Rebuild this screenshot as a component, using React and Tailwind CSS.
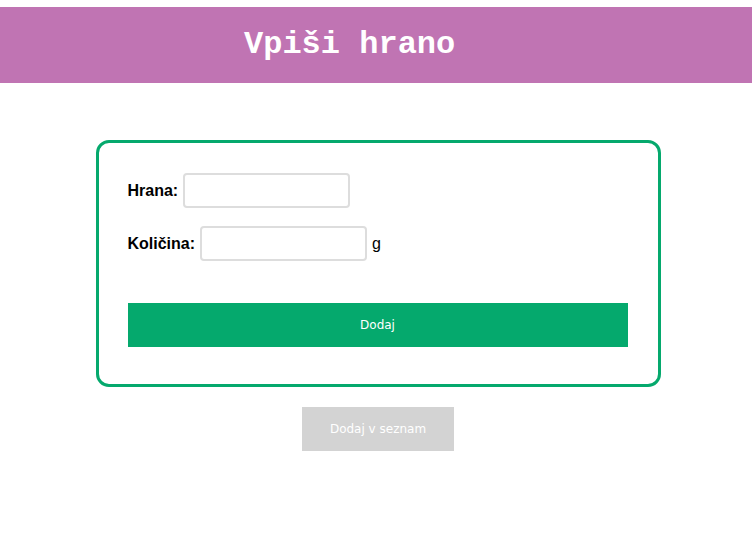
import React, { useState } from 'react';

const App = () => {
  const [hrana, setHrana] = useState('');
  const [kolicina, setKolicina] = useState('');

  return (
    <div className="min-h-screen bg-white pt-[7px] font-['Liberation_Sans',Arial,sans-serif]">
      {/* Header */}
      <header className="h-[76px] bg-[#c074b3] flex items-center pl-[244px]">
        <h1 className="text-[32px] font-bold text-white font-['Liberation_Mono','Courier_New',monospace] leading-none">
          Vpiši hrano
        </h1>
      </header>

      {/* Form card */}
      <div className="pl-[4px]">
        <div className="mt-[57px] mx-auto w-[565px] border-[3px] border-[#05a96d] rounded-[13px] pt-[30px] pb-[37px] pl-[29px] pr-[29px]">
          <div className="flex items-center gap-[5px] h-[35px]">
            <label className="text-[16px] font-bold text-black">Hrana:</label>
            <input
              value={hrana}
              onChange={(e) => setHrana(e.target.value)}
              className="w-[167px] h-[35px] border-2 border-[#dddddd] rounded-[4px] px-2 outline-none"
            />
          </div>
          <div className="flex items-center gap-[5px] h-[35px] mt-[18px]">
            <label className="text-[16px] font-bold text-black">Količina:</label>
            <input
              value={kolicina}
              onChange={(e) => setKolicina(e.target.value)}
              className="w-[167px] h-[35px] border-2 border-[#dddddd] rounded-[4px] px-2 outline-none"
            />
            <span className="text-[16px] text-black">g</span>
          </div>
          <button className="mt-[42px] w-[500px] h-[44px] bg-[#05a96d] text-white text-[12px] font-['DejaVu_Sans',sans-serif]">
            Dodaj
          </button>
        </div>
      </div>

      {/* Secondary button */}
      <div className="flex justify-center mt-[20px] pl-[4px]">
        <button className="w-[152px] h-[44px] bg-[#d3d3d3] text-white text-[12px] font-['DejaVu_Sans',sans-serif]">
          Dodaj v seznam
        </button>
      </div>
    </div>
  );
};

export default App;
